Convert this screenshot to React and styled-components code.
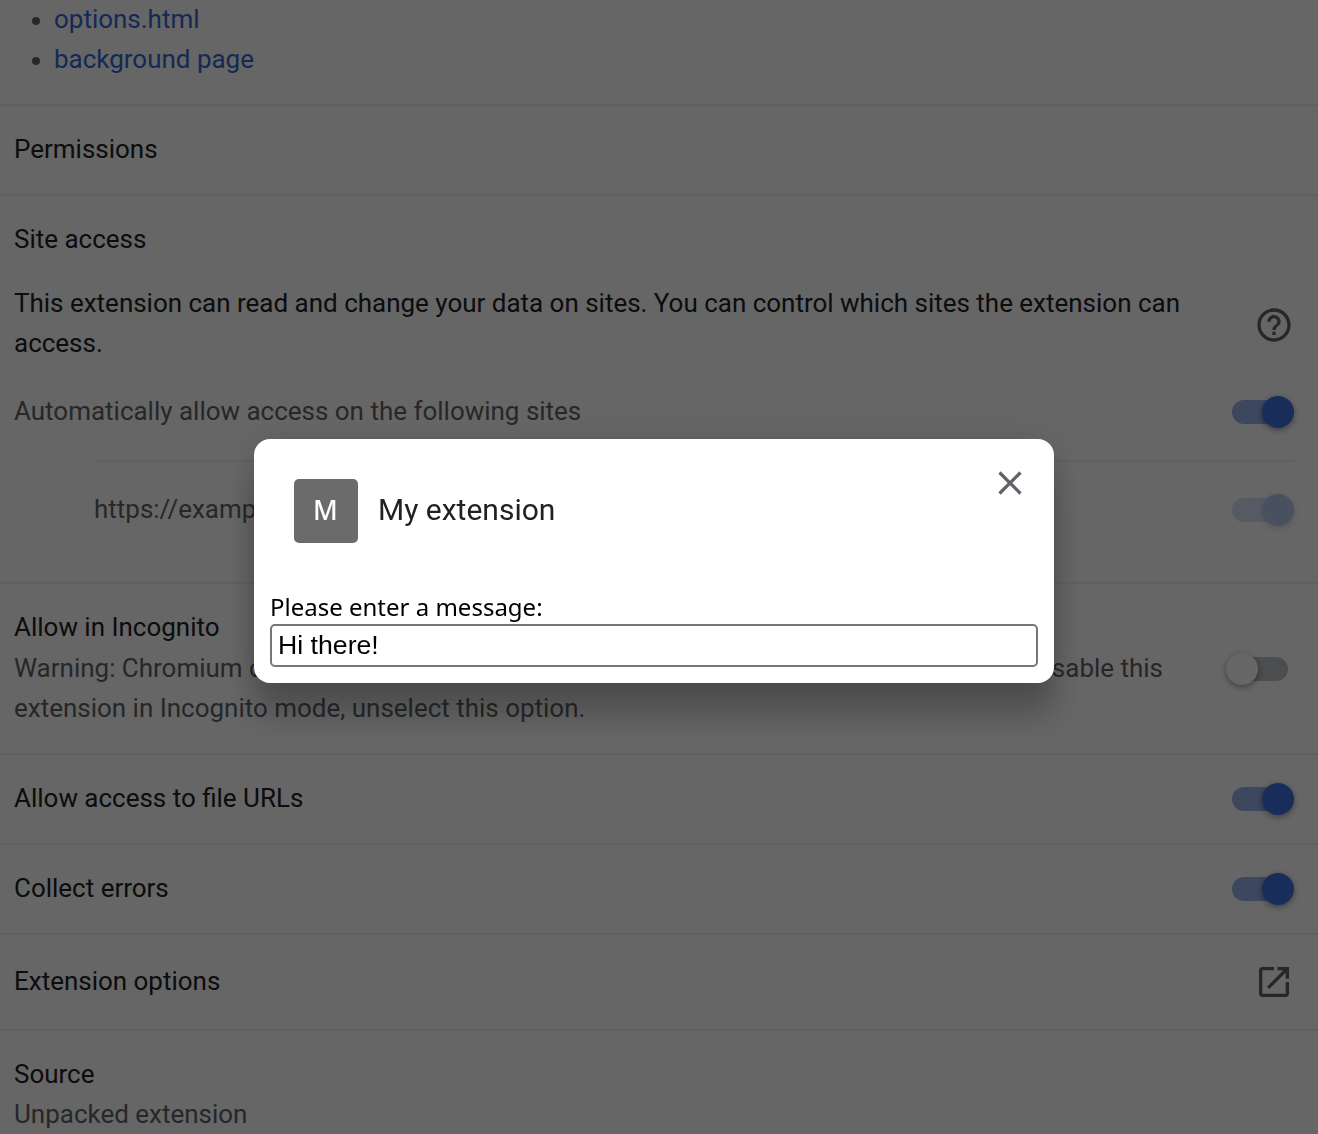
import React from "react";
import styled, { createGlobalStyle } from "styled-components";

const GlobalStyle = createGlobalStyle`
  *, *::before, *::after { box-sizing: border-box; }
  html, body { margin: 0; height: 100%; overflow: hidden; background: #fff; }
`;

const Page = styled.main`
  display: flex;
  flex-direction: column;
  height: 1134px;
  overflow: hidden;
  font: 400 25.98px/40px Roboto, "Liberation Sans", sans-serif;
  color: #202124;
`;

const ViewList = styled.ul`
  display: flex;
  flex: none;
  flex-direction: column;
  height: 104px;
  margin: 0;
  padding: 0 0 0 32px;
  list-style: none;
`;

const ViewItem = styled.li`
  display: flex;
  align-items: center;
  gap: 14px;
  height: 40px;

  &::before {
    content: "";
    width: 8px;
    height: 8px;
    margin-top: 2px;
    border-radius: 50%;
    background: #5f6368;
  }
`;

const ViewLink = styled.a`
  padding-bottom: 2px;
  color: #3367d6;
  text-decoration: none;
`;

const Section = styled.section`
  display: flex;
  flex: none;
  flex-direction: column;
  height: ${(p) => p.$height}px;
  padding: ${(p) => p.$top ?? 0}px 24px 0 14px;
  border-top: 2px solid rgba(0, 0, 0, 0.06);
`;

const Row = styled.div`
  display: flex;
  flex: none;
  align-items: center;
  justify-content: space-between;
  height: ${(p) => p.$height}px;
`;

const SiteList = styled.div`
  display: flex;
  flex-direction: column;
  margin: 26px 0 0 80px;
  border-top: 2px solid rgba(0, 0, 0, 0.06);
`;

const Text = styled.div`
  padding-bottom: 2px;
  color: ${(p) => (p.$muted ? "#5f6368" : "#202124")};
`;

const Description = styled.div`
  width: 1200px;
  padding-bottom: 4px;
`;

const TextStack = styled.div`
  display: flex;
  flex-direction: column;
  width: 1164px;
  gap: ${(p) => p.$gap ?? 0}px;
  padding-bottom: ${(p) => (p.$gap ? 3 : 0)}px;
`;

const Line = styled.div`
  color: ${(p) => (p.$muted ? "#5f6368" : "#202124")};
`;

const Track = styled.span`
  display: flex;
  flex: none;
  align-items: center;
  width: 56px;
  height: 24px;
  margin-right: 6px;
  border-radius: 12px;
  background: ${(p) => (p.$on ? "#99b3ea" : "#bdc1c6")};
  opacity: ${(p) => (p.$disabled ? 0.38 : 1)};
`;

const Knob = styled.span`
  flex: none;
  width: 32px;
  height: 32px;
  margin-left: ${(p) => (p.$on ? 30 : -6)}px;
  border-radius: 50%;
  background: ${(p) => (p.$on ? "#3f70e3" : "#fff")};
  box-shadow: 0 2px 6px rgba(0, 0, 0, 0.4);
`;

const Icon = styled.svg`
  flex: none;
  display: block;
  width: 40px;
  height: 40px;
  fill: #5f6368;
`;

const Backdrop = styled.div`
  position: fixed;
  inset: 0;
  display: flex;
  align-items: center;
  justify-content: center;
  padding: 0 10px 12px 0;
  background: rgba(0, 0, 0, 0.6);
`;

const Dialog = styled.div`
  display: flex;
  flex-direction: column;
  width: 800px;
  height: 244px;
  padding: 24px 16px 16px;
  border-radius: 16px;
  background: #fff;
  box-shadow: 0 0 32px rgba(0, 0, 0, 0.12), 0 32px 32px rgba(0, 0, 0, 0.24);
`;

const DialogHeader = styled.header`
  display: flex;
  flex: none;
  align-items: flex-start;
  gap: 20px;
  height: 124px;
  padding: 0 8px 0 24px;
`;

const Avatar = styled.div`
  width: 64px;
  height: 64px;
  margin-top: 16px;
  padding-right: 1px;
  border-radius: 5px;
  background: #6b6b6b;
  color: #fff;
  font: 500 27px/62px "Noto Sans", sans-serif;
  text-align: center;
`;

const Title = styled.h1`
  flex: 1;
  margin: 24px 0 0;
  color: #202124;
  font: 400 30px/46px Roboto, "Liberation Sans", sans-serif;
`;

const CloseButton = styled.button`
  padding: 0;
  border: 0;
  background: none;
`;

const Label = styled.label`
  height: 37px;
  color: #000;
  font: 400 24px/40px "Noto Sans", sans-serif;
`;

const MessageInput = styled.input`
  width: 768px;
  height: 43px;
  padding: 2px 6px;
  border: 2px solid #767676;
  border-radius: 5px;
  outline: 0;
  background: #fff;
  color: #000;
  font: 400 26.667px "Liberation Sans", Arial, sans-serif;
`;

function Toggle({ on, disabled }) {
  return (
    <Track $on={on} $disabled={disabled} role="switch" aria-checked={!!on}>
      <Knob $on={on} />
    </Track>
  );
}

export default function App() {
  return (
    <>
      <GlobalStyle />
      <Page>
        <ViewList>
          <ViewItem><ViewLink>options.html</ViewLink></ViewItem>
          <ViewItem><ViewLink>background page</ViewLink></ViewItem>
        </ViewList>
        <Section $height={90}>
          <Row $height={88}><Text>Permissions</Text></Row>
        </Section>
        <Section $height={388} $top={24}>
          <Row $height={40}><Text>Site access</Text></Row>
          <Row $height={130}>
            <Description>
              This extension can read and change your data on sites. You can control which sites the extension can access.
            </Description>
            <Icon viewBox="0 0 24 24">
              <path d="M11 18h2v-2h-2v2zm1-16C6.48 2 2 6.48 2 12s4.48 10 10 10 10-4.48 10-10S17.52 2 12 2zm0 18c-4.41 0-8-3.59-8-8s3.59-8 8-8 8 3.59 8 8-3.59 8-8 8zm0-14c-2.21 0-4 1.79-4 4h2c0-1.1.9-2 2-2s2 .9 2 2c0 2-3 1.75-3 5h2c0-2.25 3-2.5 3-5 0-2.21-1.79-4-4-4z" />
            </Icon>
          </Row>
          <Row $height={44}>
            <Text $muted>Automatically allow access on the following sites</Text>
            <Toggle on />
          </Row>
          <SiteList>
            <Row $height={96}>
              <Text $muted>https://example.com/*</Text>
              <Toggle on disabled />
            </Row>
          </SiteList>
        </Section>
        <Section $height={171} $top={24}>
          <Row $height={122}>
            <TextStack $gap={1}>
              <Line>Allow in Incognito</Line>
              <Line $muted>
                Warning: Chromium cannot prevent extensions from recording your browsing history. To disable this extension in Incognito mode, unselect this option.
              </Line>
            </TextStack>
            <Toggle />
          </Row>
        </Section>
        <Section $height={90}>
          <Row $height={88}><Text>Allow access to file URLs</Text><Toggle on /></Row>
        </Section>
        <Section $height={90}>
          <Row $height={88}><Text>Collect errors</Text><Toggle on /></Row>
        </Section>
        <Section $height={96}>
          <Row $height={94}>
            <Text>Extension options</Text>
            <Icon viewBox="0 0 24 24">
              <path d="M19 19H5V5h7V3H5c-1.11 0-2 .9-2 2v14c0 1.1.89 2 2 2h14c1.1 0 2-.9 2-2v-7h-2v7zM14 3v2h3.59l-9.83 9.83 1.41 1.41L19 6.41V10h2V3h-7z" />
            </Icon>
          </Row>
        </Section>
        <Section $height={105} $top={23}>
          <TextStack>
            <Line>Source</Line>
            <Line $muted>Unpacked extension</Line>
          </TextStack>
        </Section>
      </Page>
      <Backdrop>
        <Dialog role="dialog">
          <DialogHeader>
            <Avatar>M</Avatar>
            <Title>My extension</Title>
            <CloseButton aria-label="Close">
              <Icon viewBox="0 0 24 24">
                <path d="M19 6.41L17.59 5 12 10.59 6.41 5 5 6.41 10.59 12 5 17.59 6.41 19 12 13.41 17.59 19 19 17.59 13.41 12z" />
              </Icon>
            </CloseButton>
          </DialogHeader>
          <Label htmlFor="message">Please enter a message:</Label>
          <MessageInput id="message" type="text" defaultValue="Hi there!" />
        </Dialog>
      </Backdrop>
    </>
  );
}
